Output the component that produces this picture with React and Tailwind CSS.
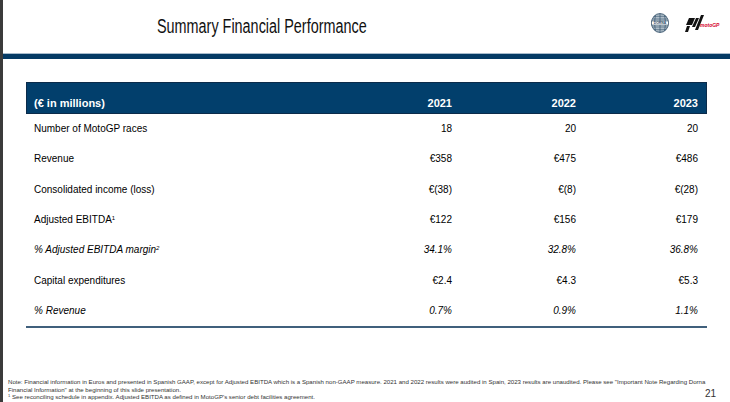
import React from "react";

const rows = [
  { label: "Number of MotoGP races", v: ["18", "20", "20"] },
  { label: "Revenue", v: ["€358", "€475", "€486"] },
  { label: "Consolidated income (loss)", v: ["€(38)", "€(8)", "€(28)"] },
  { label: "Adjusted EBITDA", sup: "1", v: ["€122", "€156", "€179"] },
  { label: "% Adjusted EBITDA margin", sup: "2", italic: true, v: ["34.1%", "32.8%", "36.8%"] },
  { label: "Capital expenditures", v: ["€2.4", "€4.3", "€5.3"] },
  { label: "% Revenue", italic: true, v: ["0.7%", "0.9%", "1.1%"] },
];

function DornaLogo() {
  return (
    <svg width="18" height="20" viewBox="0 0 18 20">
      <defs>
        <clipPath id="dc">
          <ellipse cx="9" cy="10" rx="8.5" ry="9.5" />
        </clipPath>
      </defs>
      <ellipse cx="9" cy="10" rx="8.5" ry="9.5" fill="#dfe6ec" stroke="#2d4a63" strokeWidth="0.8" />
      <g clipPath="url(#dc)" stroke="#34536d" strokeWidth="0.7">
        {[2, 3.6, 5.2, 6.8, 13.2, 14.8, 16.4, 18].map((y) => (
          <line key={y} x1="0" y1={y} x2="18" y2={y} />
        ))}
        <path d="M9 0 V20 M4.5 1 Q2.5 10 4.5 19 M13.5 1 Q15.5 10 13.5 19" fill="none" />
      </g>
      <rect x="0.5" y="8" width="17" height="4" fill="#fff" stroke="#2d4a63" strokeWidth="0.6" />
      <text x="9" y="11.3" textAnchor="middle" fontSize="3.4" fontWeight="bold" fill="#2d4a63" fontFamily="Liberation Sans, sans-serif">DORNA</text>
    </svg>
  );
}

function MotoGPLogo() {
  return (
    <svg width="36" height="18" viewBox="0 0 36 18">
      <polygon points="5,3 11,3 8,10 2,10" fill="#111" />
      <polygon points="12,3 15,3 11,12 8,12" fill="#111" />
      <polygon points="17,0 20,0 14,15 11,15" fill="#111" />
      <polygon points="3,11 6,11 4,17 1,17" fill="#111" />
      <text x="16" y="12" fontSize="5" fontStyle="italic" fontWeight="bold" fill="#d5002b" fontFamily="Liberation Sans, sans-serif">motoGP</text>
    </svg>
  );
}

export default function App() {
  return (
    <div className="w-[730px] h-[402px] overflow-hidden bg-white flex font-['Liberation_Sans',Arial,sans-serif] text-black">
      <div className="w-[3px] shrink-0 bg-[#3b3b3b]" />
      <div className="flex-1 flex flex-col min-w-0">
        <div className="h-[53px] flex items-start">
          <div className="pl-[154px] pt-[16px] whitespace-nowrap">
            <div className="text-[20px] leading-none text-[#111] origin-left scale-x-[0.72]">
              Summary Financial Performance
            </div>
          </div>
          <div className="ml-auto flex items-start gap-[15px] pr-[10px] pt-[13px]">
            <DornaLogo />
            <div className="pt-[2px]">
              <MotoGPLogo />
            </div>
          </div>
        </div>
        <div className="h-px bg-[#a9bccd]" />
        <div className="h-[5px] bg-[#053a64]" />

        <div className="mx-[23px] mt-[23px] border-b-2 border-[#40607c]">
          <div className="h-[32px] bg-[#023f6c] border border-[#0b2b4a] grid grid-cols-[minmax(0,1fr)_120px_124px_122px] items-end pl-[7px] pr-[8px] pb-[4px] text-white font-bold text-[11px] leading-none">
            <div>(€ in millions)</div>
            <div className="text-right">2021</div>
            <div className="text-right">2022</div>
            <div className="text-right">2023</div>
          </div>
          {rows.map((r) => (
            <div
              key={r.label}
              className={`h-[30.3px] grid grid-cols-[minmax(0,1fr)_120px_124px_122px] items-center pl-[8px] pr-[9px] text-[10px] leading-none ${r.italic ? "italic" : ""}`}
            >
              <div>
                {r.label}
                {r.sup && <sup className="text-[6px]">{r.sup}</sup>}
              </div>
              {r.v.map((v, i) => (
                <div key={i} className="text-right">{v}</div>
              ))}
            </div>
          ))}
        </div>

        <div className="mt-auto relative pl-[5px] text-[6.1px] leading-[7.5px] text-[#333] whitespace-nowrap translate-y-[6px]">
          <div>
            Note: Financial information in Euros and presented in Spanish GAAP, except for Adjusted EBITDA which is a Spanish non-GAAP measure. 2021 and 2022 results were audited in Spain, 2023 results are unaudited. Please see "Important Note Regarding Dorna
          </div>
          <div>Financial Information" at the beginning of this slide presentation.</div>
          <div>
            <sup className="text-[4px]">1</sup> See reconciling schedule in appendix. Adjusted EBITDA as defined in MotoGP's senior debt facilities agreement.
          </div>
          <div>
            <sup className="text-[4px]">2</sup> Defined as Adjusted EBITDA divided by revenue for the relevant period.
          </div>
          <div className="absolute right-[14px] top-[11px] text-[10px] leading-none text-[#333]">21</div>
        </div>
      </div>
    </div>
  );
}
